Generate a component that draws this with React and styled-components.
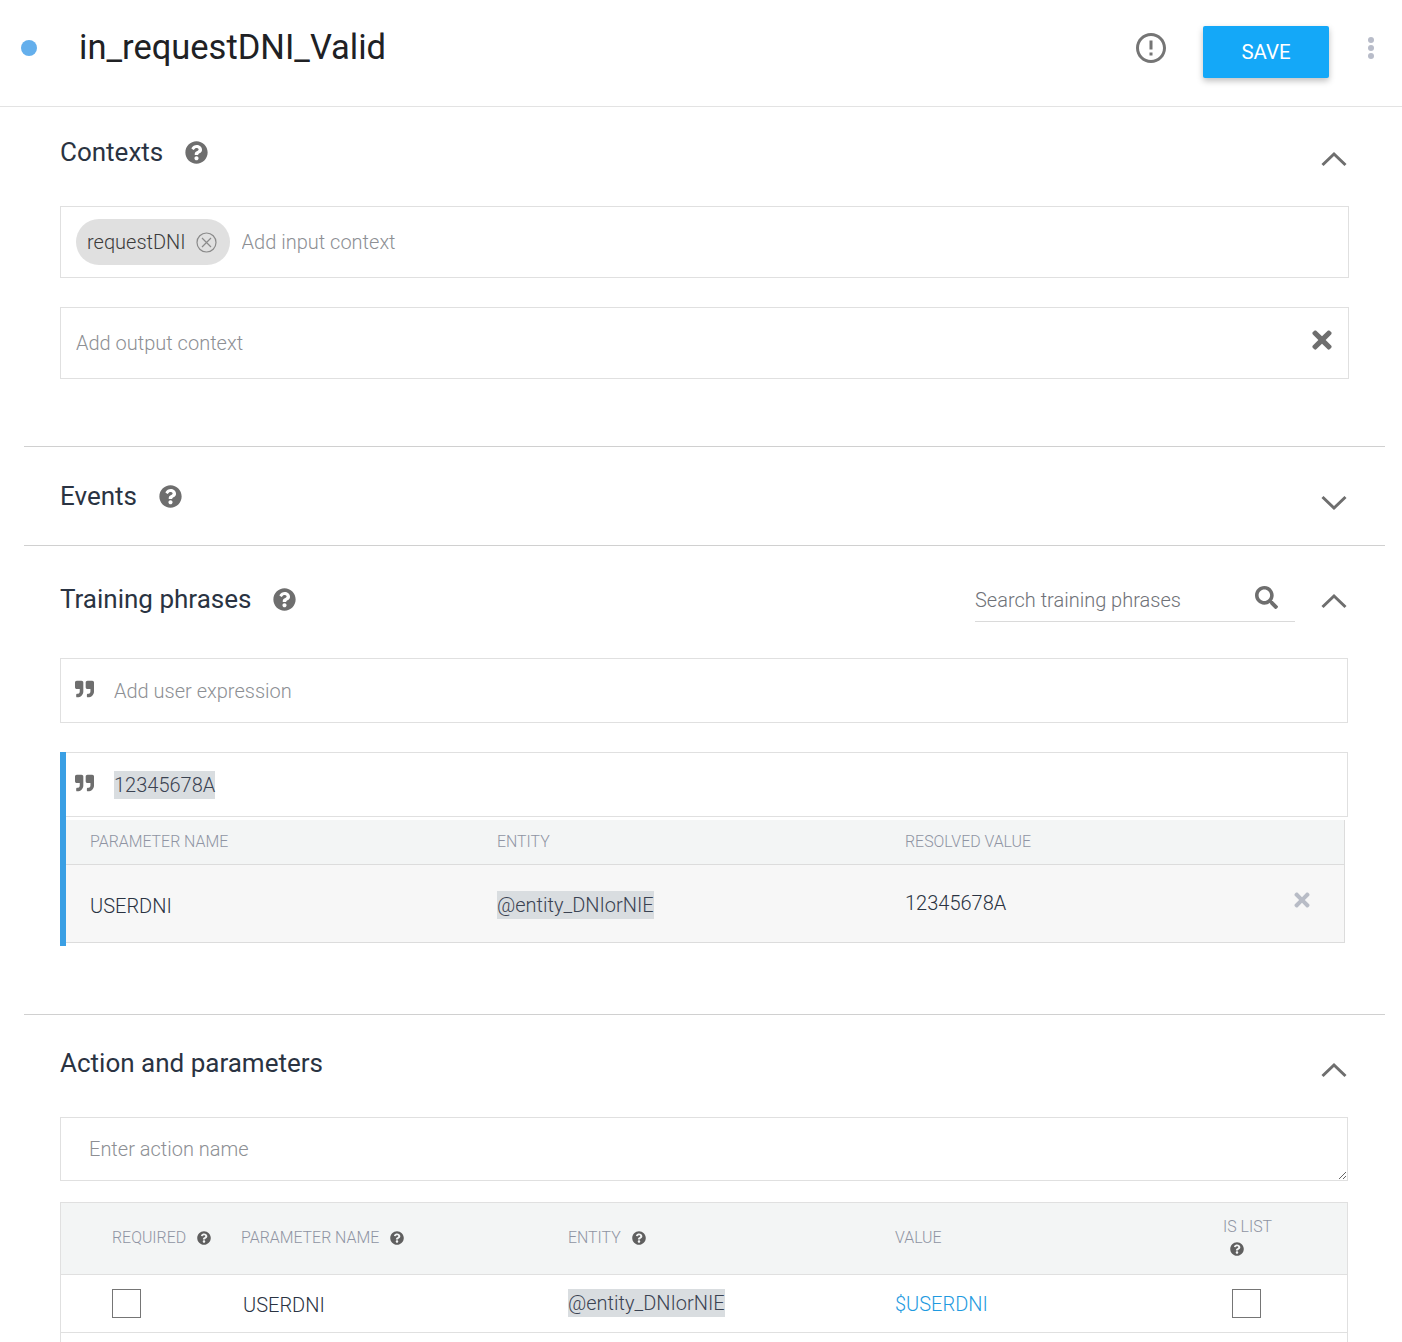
import React from "react";
import styled, { createGlobalStyle } from "styled-components";
import { FaQuestionCircle, FaQuoteRight, FaSearch, FaTimes } from "react-icons/fa";
import { MdErrorOutline } from "react-icons/md";

const GlobalStyle = createGlobalStyle`
  html, body { margin: 0; padding: 0; background: #fff; }
  body { font-family: Roboto, "Liberation Sans", sans-serif; }
  * { box-sizing: border-box; }
`;

const Page = styled.div`
  width: 1402px;
  height: 1342px;
  overflow: hidden;
  background: #fff;
`;

const Header = styled.header`
  height: 107px;
  display: flex;
  align-items: flex-start;
  border-bottom: 1px solid #e3e3e3;
`;

const StatusDot = styled.span`
  width: 16px;
  height: 16px;
  margin: 40px 0 0 21px;
  border-radius: 50%;
  background: #64afec;
`;

const IntentName = styled.h1`
  margin: 26px 0 0 42px;
  font-size: 34.5px;
  line-height: 42px;
  font-weight: 400;
  color: #202124;
  flex: 1;
`;

const AlertIcon = styled(MdErrorOutline)`
  margin: 30px 34px 0 0;
  font-size: 36px;
  color: #757575;
`;

const SaveButton = styled.button`
  width: 126px;
  height: 52px;
  margin-top: 26px;
  border: 0;
  border-radius: 2px;
  background: #14a8f8;
  color: #fff;
  font: 400 20.4px Roboto, sans-serif;
  box-shadow: 0 3px 6px rgba(0, 0, 0, 0.25);
`;

const Kebab = styled.span`
  display: flex;
  flex-direction: column;
  gap: 2px;
  margin: 37px 28px 0 39px;
`;

const KebabDot = styled.i`
  width: 6px;
  height: 6px;
  border-radius: 50%;
  background: #b8bcc9;
`;

const Section = styled.section`
  margin: 0 17px 0 24px;
  padding: ${(p) => p.$pad};
  border-bottom: ${(p) => (p.$last ? "0" : "1px solid #d0d0d0")};
`;

const SectionHead = styled.div`
  display: flex;
  align-items: center;
  height: 38px;
  padding-right: 36px;
`;

const SectionTitle = styled.h2`
  margin: 0;
  font-size: 26px;
  line-height: 38px;
  font-weight: 400;
  color: #2a3342;
`;

const HelpIcon = styled(FaQuestionCircle)`
  margin-left: 22px;
  font-size: 23px;
  color: #6e6e6e;
`;

const Chevron = styled.svg`
  width: 26px;
  height: 16px;
  margin: ${(p) => p.$top ?? 13}px 2px 0 26px;
  fill: none;
  stroke: #6e6e6e;
  stroke-width: 3;
`;

const Spacer = styled.div`
  flex: 1;
`;

const SearchField = styled.div`
  width: 320px;
  height: 42px;
  display: flex;
  align-items: flex-start;
  justify-content: space-between;
  margin-top: 4px;
  padding-right: 17px;
  border-bottom: 1px solid #dadada;
`;

const SearchInput = styled.input`
  width: 260px;
  height: 36px;
  border: 0;
  padding: 0;
  margin-top: 2px;
  outline: 0;
  background: transparent;
  font: 300 20px Roboto, sans-serif;
  color: #3b4352;
  &::placeholder { color: #6f7278; opacity: 1; }
`;

const SearchIcon = styled(FaSearch)`
  font-size: 23px;
  margin-top: 6px;
  color: #6e6e6e;
`;

const FieldBox = styled.div`
  display: flex;
  align-items: center;
  height: ${(p) => p.$h}px;
  width: ${(p) => p.$w || 1288}px;
  margin-top: ${(p) => p.$top}px;
  padding: 0 ${(p) => p.$padRight || 0}px 0 ${(p) => p.$padLeft || 15}px;
  border: 1px solid #e0e0e0;
  background: #fff;
`;

const PlainInput = styled.input`
  flex: 1;
  min-width: 0;
  height: 32px;
  border: 0;
  padding: 0;
  outline: 0;
  background: transparent;
  font: 300 20px Roboto, sans-serif;
  &::placeholder { color: #8d8f94; opacity: 1; }
`;

const Chip = styled.span`
  display: flex;
  align-items: center;
  height: 46px;
  padding: 0 13px 0 11px;
  margin-right: 12px;
  border-radius: 23px;
  background: #e0e0e0;
  font-size: 20px;
  font-weight: 300;
  color: #3c3c3c;
`;

const ChipClose = styled.svg`
  width: 21px;
  height: 21px;
  margin-left: 10px;
  fill: none;
  stroke: #8a8a8a;
  stroke-width: 1.2;
`;

const ClearIcon = styled(FaTimes)`
  margin: -6px -2px 0 0;
  font-size: 28px;
  color: #6e6e6e;
`;

const QuoteIcon = styled(FaQuoteRight)`
  width: 19px;
  height: 20px;
  margin: -4px 20px 0 0;
  color: #6e6e6e;
`;

const PhraseBlock = styled.div`
  width: 1288px;
  margin-top: 29px;
  border-left: 6px solid #3a9fe4;
  padding-bottom: 3px;
`;

const PhraseRow = styled.div`
  display: flex;
  align-items: center;
  height: 65px;
  padding-left: 9px;
  border: 1px solid #e0e0e0;
  border-left: 0;
`;

const Highlighted = styled.span`
  padding: 2px 0;
  background: #d9dde0;
  font-size: 20px;
  font-weight: 300;
  color: #3b4352;
`;

const AnnotationGrid = styled.div`
  display: grid;
  grid-template-columns: 407px 408px 1fr;
  align-items: center;
  width: 1279px;
  height: ${(p) => p.$h}px;
  margin-top: ${(p) => p.$top || 0}px;
  padding-left: 24px;
  background: ${(p) => p.$bg};
  border-right: 1px solid #dcdcdc;
  border-bottom: 1px solid #dcdcdc;
`;

const ColumnLabel = styled.span`
  display: inline-flex;
  align-items: center;
  margin-top: -2px;
  font-size: 15.9px;
  font-weight: 300;
  color: #8f94a3;
`;

const CellText = styled.span`
  font-size: 20px;
  font-weight: 300;
  color: #2a3342;
  margin-left: ${(p) => p.$shift || 0}px;
  margin-top: ${(p) => p.$nudge || 0}px;
`;

const EntityCell = styled.div`
  margin-top: ${(p) => p.$nudge}px;
`;

const ResolvedCell = styled.div`
  display: flex;
  justify-content: space-between;
  align-items: center;
  padding-right: 31px;
  margin-top: -2px;
`;

const RemoveIcon = styled(FaTimes)`
  margin-top: -6px;
  font-size: 22px;
  color: #b8bcc6;
`;

const ActionArea = styled.textarea`
  display: block;
  width: 1288px;
  height: 64px;
  margin-top: 35px;
  padding: 19px 28px;
  border: 1px solid #e0e0e0;
  border-radius: 0;
  outline: 0;
  resize: both;
  font: 300 20px Roboto, sans-serif;
  &::placeholder { color: #8d8f94; opacity: 1; }
`;

const ParamTable = styled.div`
  width: 1288px;
  margin-top: 21px;
  border: 1px solid #e0e0e0;
  border-bottom: 0;
`;

const ParamRow = styled.div`
  display: grid;
  grid-template-columns: 129px 327px 327px 328px 1fr;
  align-items: center;
  height: ${(p) => p.$h}px;
  padding-left: 51px;
  background: ${(p) => p.$bg || "#fff"};
  border-bottom: ${(p) => (p.$open ? "0" : "1px solid #e0e0e0")};
`;

const SmallHelp = styled(FaQuestionCircle)`
  margin-left: 11px;
  font-size: 14px;
  color: #5f5f5f;
`;

const StackedLabel = styled.div`
  display: flex;
  flex-direction: column;
  align-items: flex-start;
  gap: 6px;
  margin-top: -2px;
`;

const StackedHelp = styled(SmallHelp)`
  margin-left: 7px;
`;

const Check = styled.span`
  display: block;
  width: 29px;
  height: 29px;
  margin-left: ${(p) => p.$left || 0}px;
  border: 1px solid #757575;
`;

const ValueLink = styled.span`
  font-size: 20px;
  font-weight: 300;
  color: #1e9ae0;
`;

const ChevronUp = ({ top }) => (
  <Chevron $top={top} viewBox="0 0 26 16"><path d="M1.5 14 13 3l11.500 11" /></Chevron>
);

const ChevronDown = () => (
  <Chevron viewBox="0 0 26 16"><path d="M1.500 2 13 13 24.500 2" /></Chevron>
);

const App = () => {
  return (
    <Page>
      <GlobalStyle />
      <Header>
        <StatusDot />
        <IntentName>in_requestDNI_Valid</IntentName>
        <AlertIcon />
        <SaveButton>SAVE</SaveButton>
        <Kebab><KebabDot /><KebabDot /><KebabDot /></Kebab>
      </Header>

      <Section $pad="26px 0 67px 36px">
        <SectionHead>
          <SectionTitle>Contexts</SectionTitle>
          <HelpIcon />
          <Spacer />
          <ChevronUp />
        </SectionHead>
        <FieldBox $h={72} $w={1289} $top={35}>
          <Chip>
            requestDNI
            <ChipClose viewBox="0 0 21 21">
              <circle cx="10.500" cy="10.500" r="9.500" />
              <path d="m6 6 9 9M15 6l-9 9" />
            </ChipClose>
          </Chip>
          <PlainInput placeholder="Add input context" />
        </FieldBox>
        <FieldBox $h={72} $w={1289} $top={29} $padRight={14}>
          <PlainInput placeholder="Add output context" />
          <ClearIcon />
        </FieldBox>
      </Section>

      <Section $pad="30px 0 30px 36px">
        <SectionHead>
          <SectionTitle>Events</SectionTitle>
          <HelpIcon />
          <Spacer />
          <ChevronDown />
        </SectionHead>
      </Section>

      <Section $pad="34px 0 68px 36px">
        <SectionHead>
          <SectionTitle>Training phrases</SectionTitle>
          <HelpIcon />
          <Spacer />
          <SearchField>
            <SearchInput placeholder="Search training phrases" />
            <SearchIcon />
          </SearchField>
          <ChevronUp top={4} />
        </SectionHead>
        <FieldBox $h={65} $top={40} $padLeft={14}>
          <QuoteIcon />
          <PlainInput placeholder="Add user expression" />
        </FieldBox>
        <PhraseBlock>
          <PhraseRow>
            <QuoteIcon />
            <Highlighted>12345678A</Highlighted>
          </PhraseRow>
          <AnnotationGrid $h={45} $top={3} $bg="#f3f5f5">
            <ColumnLabel>PARAMETER NAME</ColumnLabel>
            <ColumnLabel>ENTITY</ColumnLabel>
            <ColumnLabel>RESOLVED VALUE</ColumnLabel>
          </AnnotationGrid>
          <AnnotationGrid $h={78} $bg="#f7f7f7">
            <CellText $nudge={4}>USERDNI</CellText>
            <EntityCell $nudge={2}><Highlighted>@entity_DNIorNIE</Highlighted></EntityCell>
            <ResolvedCell>
              <CellText>12345678A</CellText>
              <RemoveIcon />
            </ResolvedCell>
          </AnnotationGrid>
        </PhraseBlock>
      </Section>

      <Section $pad="29px 0 0 36px" $last>
        <SectionHead>
          <SectionTitle>Action and parameters</SectionTitle>
          <Spacer />
          <ChevronUp />
        </SectionHead>
        <ActionArea placeholder="Enter action name" />
        <ParamTable>
          <ParamRow $h={72} $bg="#f3f5f5">
            <ColumnLabel>REQUIRED<SmallHelp /></ColumnLabel>
            <ColumnLabel>PARAMETER NAME<SmallHelp /></ColumnLabel>
            <ColumnLabel>ENTITY<SmallHelp /></ColumnLabel>
            <ColumnLabel>VALUE</ColumnLabel>
            <StackedLabel>
              <ColumnLabel>IS LIST</ColumnLabel>
              <StackedHelp />
            </StackedLabel>
          </ParamRow>
          <ParamRow $h={58}>
            <Check />
            <CellText $shift={2} $nudge={2}>USERDNI</CellText>
            <EntityCell $nudge={-2}><Highlighted>@entity_DNIorNIE</Highlighted></EntityCell>
            <ValueLink>$USERDNI</ValueLink>
            <Check $left={9} />
          </ParamRow>
          <ParamRow $h={20} $open />
        </ParamTable>
      </Section>
    </Page>
  );
};

export default App;
